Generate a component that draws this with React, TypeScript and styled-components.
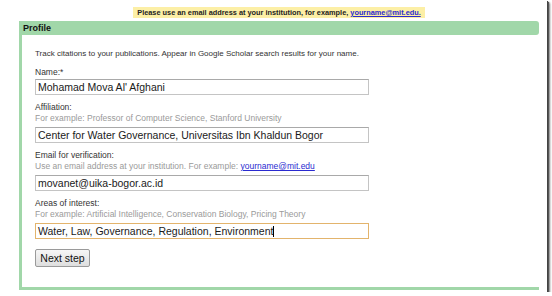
import React from "react";
import styled, { createGlobalStyle } from "styled-components";

const Global = createGlobalStyle`
  html, body { margin: 0; padding: 0; background: #ffffff; }
  body { font-family: "Liberation Sans", Arial, sans-serif; }
`;

const GREEN = "#a1d7a9";

const Frame = styled.div`
  width: 547px;
  height: 292px;
  background: #ffffff;
  box-shadow: 1px 1px 0 #444, 2px 2px 1px #555, 3px 3px 2px rgba(0, 0, 0, 0.45);
  overflow: hidden;
  padding-top: 7px;
  box-sizing: border-box;
`;

const Column = styled.div`
  margin-left: 19px;
  width: 520px;
  display: flex;
  flex-direction: column;
`;

const BannerRow = styled.div`
  display: flex;
  justify-content: center;
  height: 11px;
  margin-bottom: 3px;
`;

const Banner = styled.div`
  background: #fcefa6;
  font-size: 7.35px;
  line-height: 11px;
  font-weight: bold;
  color: #222;
  padding: 0 4px;
  white-space: nowrap;
`;

const Link = styled.a`
  color: #2a2ad0;
  text-decoration: underline;
`;

const Header = styled.div`
  background: ${GREEN};
  height: 14px;
  line-height: 14px;
  font-size: 9px;
  font-weight: bold;
  color: #111;
  padding-left: 4px;
  border-radius: 0 3px 3px 0;
`;

const Body = styled.div`
  border-left: 3px solid ${GREEN};
  border-bottom: 3px solid ${GREEN};
  height: 255px;
  box-sizing: border-box;
  padding: 13px 0 0 13px;
  display: flex;
  flex-direction: column;
`;

const Intro = styled.div`
  font-size: 8px;
  line-height: 11px;
  color: #333;
  margin-bottom: 8px;
`;

const Field = styled.div`
  display: flex;
  flex-direction: column;
  margin-bottom: 7px;
`;

const Label = styled.div`
  font-size: 8.5px;
  line-height: 11px;
  color: #333;
`;

const Hint = styled.div`
  font-size: 8.5px;
  line-height: 11px;
  color: #9a9a9a;
`;

const Input = styled.div<{ $focused?: boolean; $gap?: number }>`
  width: 334px;
  height: 16px;
  box-sizing: border-box;
  margin-top: ${(p) => p.$gap ?? 3}px;
  border: 1px solid ${(p) => (p.$focused ? "#e3b46c" : "#c4c4c4")};
  border-top-color: ${(p) => (p.$focused ? "#e3b46c" : "#a9a9a9")};
  font-size: 10.5px;
  line-height: 14px;
  color: #1a1a1a;
  padding-left: 2px;
  white-space: nowrap;
  overflow: hidden;
`;

const Caret = styled.span`
  display: inline-block;
  width: 1px;
  height: 11px;
  background: #000;
  vertical-align: -2px;
`;

const Button = styled.button`
  align-self: flex-start;
  margin-top: 3px;
  width: 55px;
  height: 18px;
  padding: 0;
  font-family: "Liberation Sans", Arial, sans-serif;
  font-size: 10.5px;
  color: #111;
  border: 1px solid #9a9a9a;
  border-radius: 2px;
  background: linear-gradient(#f6f6f6, #dedede);
`;

export default function App() {
  return (
    <>
      <Global />
      <Frame>
        <Column>
          <BannerRow>
            <Banner>
              Please use an email address at your institution, for example,{" "}
              <Link href="#">yourname@mit.edu.</Link>
            </Banner>
          </BannerRow>
          <Header>Profile</Header>
          <Body>
            <Intro>
              Track citations to your publications. Appear in Google Scholar search results for your name.
            </Intro>
            <Field>
              <Label>Name:*</Label>
              <Input $gap={1}>Mohamad Mova Al' Afghani</Input>
            </Field>
            <Field>
              <Label>Affiliation:</Label>
              <Hint>For example: Professor of Computer Science, Stanford University</Hint>
              <Input>Center for Water Governance, Universitas Ibn Khaldun Bogor</Input>
            </Field>
            <Field>
              <Label>Email for verification:</Label>
              <Hint>
                Use an email address at your institution. For example: <Link href="#">yourname@mit.edu</Link>
              </Hint>
              <Input>movanet@uika-bogor.ac.id</Input>
            </Field>
            <Field>
              <Label>Areas of interest:</Label>
              <Hint>For example: Artificial Intelligence, Conservation Biology, Pricing Theory</Hint>
              <Input $focused>
                Water, Law, Governance, Regulation, Environment<Caret />
              </Input>
            </Field>
            <Button>Next step</Button>
          </Body>
        </Column>
      </Frame>
    </>
  );
}
